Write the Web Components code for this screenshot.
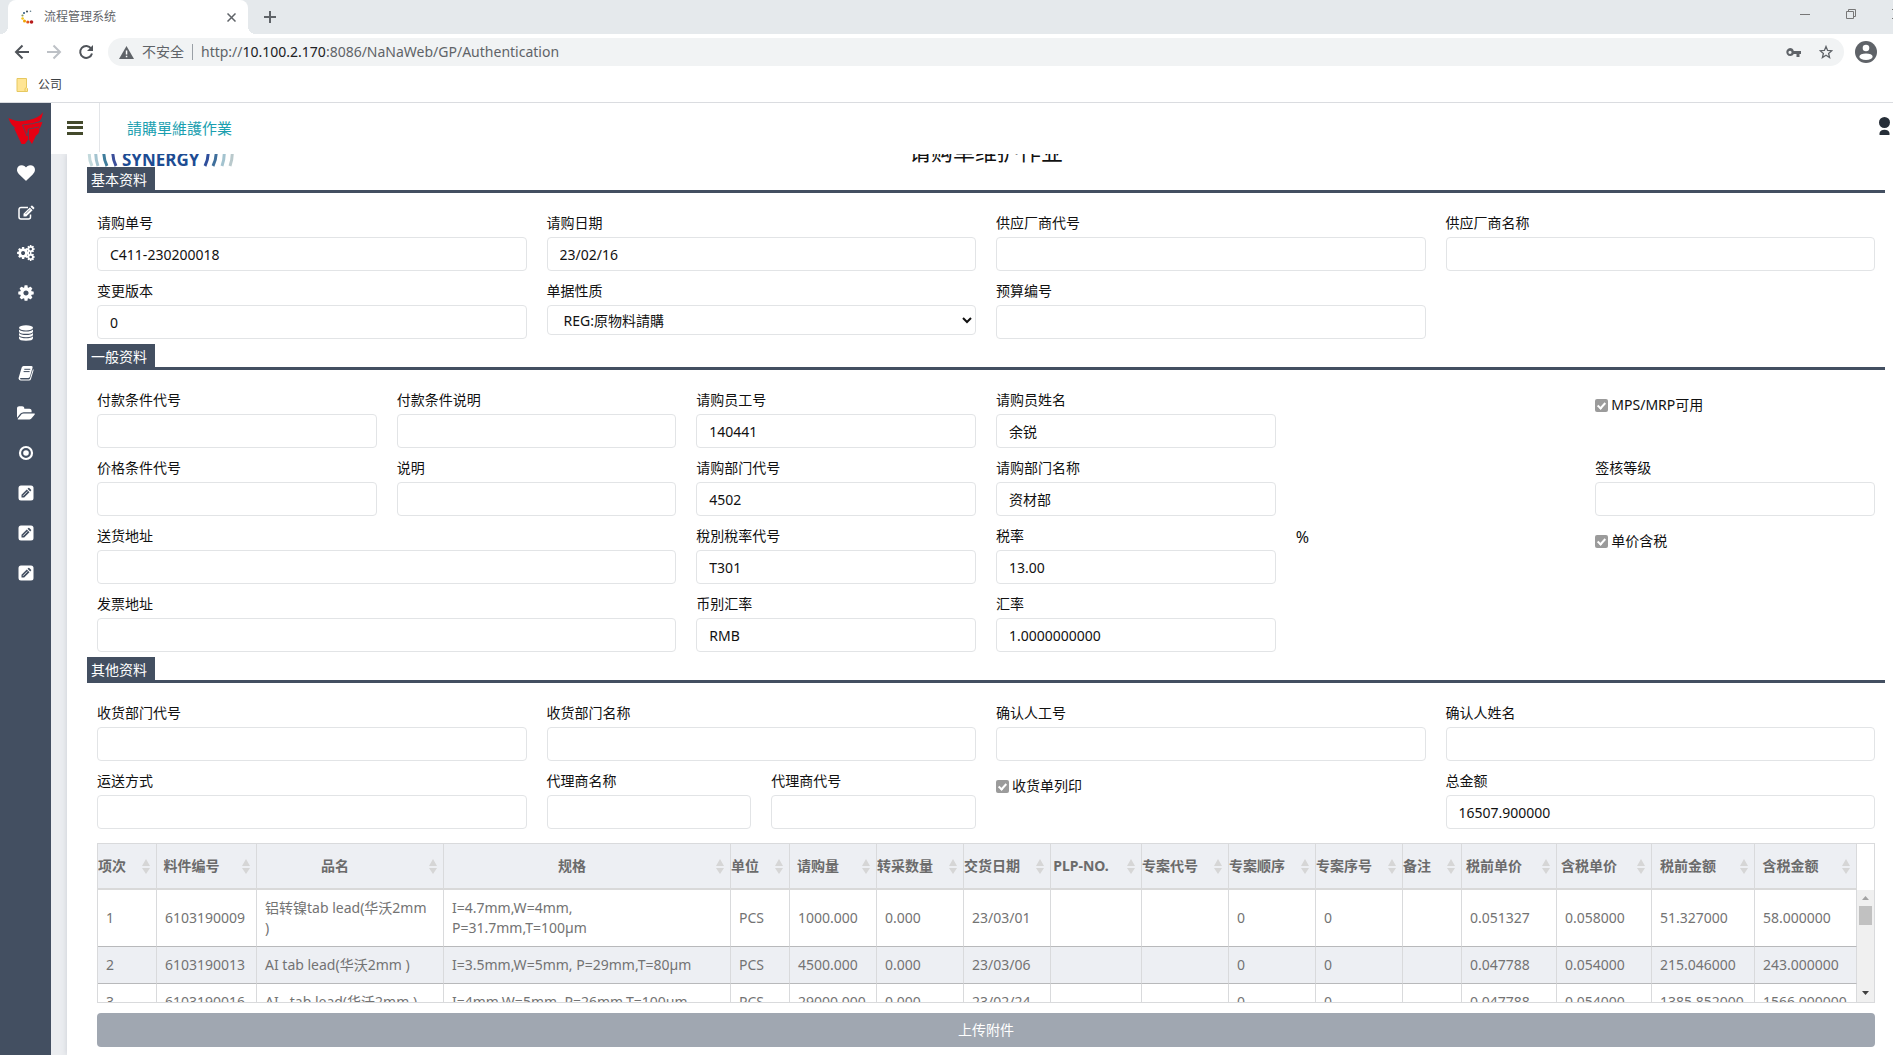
<!DOCTYPE html>
<html lang="zh-CN">
<head>
<meta charset="utf-8">
<title>流程管理系统</title>
<style>
html,body{height:100%;margin:0}
body{font:14px/20px "Noto Sans","Noto Sans CJK SC","Noto Sans CJK TC",sans-serif;color:#111;background:#fff;overflow:hidden;display:flex;flex-direction:column}
.app{flex:1;display:flex;min-height:0}
.work{flex:1;display:flex;flex-direction:column;min-width:0}
</style>
</head>
<body>
<browser-chrome page-title="流程管理系统"></browser-chrome>
<div class="app">
  <side-nav></side-nav>
  <div class="work">
    <app-header>請購單維護作業</app-header>
    <form-card heading="请购单维护作业">
      <form-section heading="基本资料">
        <form-field span="6" label="请购单号" value="C411-230200018"></form-field>
        <form-field span="6" label="请购日期" value="23/02/16"></form-field>
        <form-field span="6" label="供应厂商代号"></form-field>
        <form-field span="6" label="供应厂商名称"></form-field>
        <form-field span="6" label="变更版本" value="0"></form-field>
        <select-field span="6" label="单据性质" value="REG:原物料請購"></select-field>
        <form-field span="6" label="预算编号"></form-field>
      </form-section>
      <form-section heading="一般资料">
        <form-field span="4" label="付款条件代号"></form-field>
        <form-field span="4" label="付款条件说明"></form-field>
        <form-field span="4" label="请购员工号" value="140441"></form-field>
        <form-field span="4" label="请购员姓名" value="余锐"></form-field>
        <check-field span="4" start="21" label="MPS/MRP可用"></check-field>
        <form-field span="4" label="价格条件代号"></form-field>
        <form-field span="4" label="说明"></form-field>
        <form-field span="4" label="请购部门代号" value="4502"></form-field>
        <form-field span="4" label="请购部门名称" value="资材部"></form-field>
        <form-field span="4" start="21" label="签核等级"></form-field>
        <form-field span="8" label="送货地址"></form-field>
        <form-field span="4" label="稅別稅率代号" value="T301"></form-field>
        <form-field span="4" label="税率" value="13.00"></form-field>
        <unit-mark span="4">%</unit-mark>
        <check-field span="4" start="21" label="单价含税"></check-field>
        <form-field span="8" label="发票地址"></form-field>
        <form-field span="4" label="币别汇率" value="RMB"></form-field>
        <form-field span="4" label="汇率" value="1.0000000000"></form-field>
      </form-section>
      <form-section heading="其他资料">
        <form-field span="6" label="收货部门代号"></form-field>
        <form-field span="6" label="收货部门名称"></form-field>
        <form-field span="6" label="确认人工号"></form-field>
        <form-field span="6" label="确认人姓名"></form-field>
        <form-field span="6" label="运送方式"></form-field>
        <form-field span="3" label="代理商名称"></form-field>
        <form-field span="3" label="代理商代号"></form-field>
        <check-field span="6" label="收货单列印"></check-field>
        <form-field span="6" label="总金额" value="16507.900000"></form-field>
      </form-section>
      <data-grid></data-grid>
      <upload-button>上传附件</upload-button>
    </form-card>
  </div>
</div>
<script>
const BASE = '*{box-sizing:border-box}button,input,select{font:inherit;color:inherit;margin:0}button{border:0;padding:0;background:none;display:flex;align-items:center;justify-content:center}svg{display:block;flex:none}';
function define(name, render) {
  customElements.define(name, class extends HTMLElement {
    connectedCallback() {
      if (this.shadowRoot) return;
      const span = this.getAttribute('span'), start = this.getAttribute('start');
      if (span) this.style.gridColumn = (start ? start + ' / ' : '') + 'span ' + span;
      const t = document.createElement('template');
      t.innerHTML = '<style>' + BASE + '</style>' + render(this);
      this.attachShadow({mode: 'open'}).append(t.content);
    }
  });
}

define('browser-chrome', el => `
<style>
:host{display:block;color:#5f6368;border-bottom:1px solid #dadce0}
.strip{height:34px;background:#e5e9ec;display:flex;overflow:hidden}
.flare{width:8px;align-self:flex-end;height:8px;background:radial-gradient(circle at 0 0,#e5e9ec 8px,#fff 8px)}
.flare.r{background:radial-gradient(circle at 100% 0,#e5e9ec 8px,#fff 8px)}
.tab{width:240px;background:#fff;border-radius:8px 8px 0 0;display:flex;align-items:center;padding:0 12px 0 13px;gap:10px;font-size:12px}
.tab span{flex:1}
.plus{width:28px}
.win{margin-left:auto;display:flex}
.win button{width:46px;height:28px}
.win .close{width:19px;overflow:hidden;justify-content:flex-start;padding-left:18px}
.bar{height:36px;display:flex;align-items:center;padding:0 16px 0 14px}
.nav{display:flex;gap:16px;margin-right:14px}
.omni{flex:1;height:28px;border-radius:14px;background:#f1f3f4;display:flex;align-items:center;padding:0 11px;gap:8px;margin-right:11px}
.omni .url{flex:1}
.sep{width:1px;height:16px;background:#9aa0a6}
.url b{font-weight:400;color:#202124}
.tools{display:flex;gap:18px}
.marks{height:32px;display:flex;align-items:center;padding:0 16px 2px;font-size:12px;color:#3c4043}
.marks a{display:flex;gap:10px;align-items:center;color:inherit;text-decoration:none}
</style>
<div class="strip"><div class="flare"></div>
<div class="tab">
<svg width="13" height="14" viewBox="0 0 13 14"><circle cx="6" cy="1.500" r="1" fill="#37474f"/><circle cx="9.500" cy="1.200" r=".8" fill="#607d8b"/><circle cx="3" cy="3" r="1" fill="#26547c"/><circle cx="1.500" cy="5.500" r="1.100" fill="#8a9a5b"/><circle cx="1.600" cy="8.500" r="1.300" fill="#f5c518"/><circle cx="3.500" cy="11" r="1.500" fill="#f0a500"/><circle cx="6.800" cy="12" r="1.600" fill="#e2571e"/><circle cx="10.500" cy="12" r="1.800" fill="#b71c1c"/></svg>
<span>${el.getAttribute('page-title')}</span>
<button aria-label="关闭标签"><svg width="9" height="9" viewBox="0 0 9 9" stroke="#5f6368" stroke-width="1.500"><path d="M.5.5l8 8M8.500.5l-8 8"/></svg></button>
</div><div class="flare r"></div>
<button class="plus" aria-label="新标签"><svg width="12" height="12" stroke="#5f6368" stroke-width="2"><path d="M6 0v12M0 6h12"/></svg></button>
<div class="win"><button aria-label="最小化"><svg width="10" height="10" stroke="#777"><path d="M0 5.500h10"/></svg></button>
<button aria-label="还原"><svg width="10" height="10" fill="none" stroke="#777"><path d="M.5 2.500h7v7h-7zM2.500 2.500v-2h7v7h-2"/></svg></button>
<button class="close" aria-label="关闭"><svg width="10" height="10" stroke="#777"><path d="M0 0l10 10M10 0L0 10"/></svg></button></div></div>
<div class="bar"><div class="nav">
<button aria-label="后退"><svg width="16" height="16" fill="none" stroke="#50545a" stroke-width="2"><path d="M15 8H2M8.500 1.500L2 8l6.500 6.500"/></svg></button>
<button aria-label="前进"><svg width="16" height="16" fill="none" stroke="#bdc1c6" stroke-width="2"><path d="M1 8h13M7.500 1.500L14 8l-6.500 6.500"/></svg></button>
<button aria-label="刷新"><svg width="16" height="16" fill="none" stroke="#50545a" stroke-width="2"><path d="M13.200 4.600A6 6 0 1 0 14 9.500"/><path d="M15 1v6H9z" fill="#50545a" stroke="none"/></svg></button></div>
<div class="omni"><svg width="15" height="13" viewBox="0 0 15 13"><path d="M7.500 0L15 13H0z" fill="#5f6368"/><path d="M6.800 4.500h1.500v4H6.800zM6.800 9.700h1.500v1.500H6.800z" fill="#fff"/></svg>
<span>不安全</span><i class="sep"></i><span class="url">http://<b>10.100.2.170</b>:8086/NaNaWeb/GP/Authentication</span>
<div class="tools"><button aria-label="密码"><svg width="15" height="9" viewBox="0 0 15 9"><path fill="#5f6368" fill-rule="evenodd" d="M4 0a4 4 0 0 1 3.800 3H15v3h-1.500v3h-3V6H7.800A4 4 0 1 1 4 0zm0 2.700a1.600 1.600 0 1 0 0 3.200 1.600 1.600 0 0 0 0-3.200z"/></svg></button>
<button aria-label="收藏"><svg width="14" height="14" viewBox="0 0 14 14" fill="none" stroke="#5f6368" stroke-width="1.300"><path d="M7 1.500l1.600 3.900 4.200.3-3.200 2.700 1 4.100L7 10.300l-3.600 2.200 1-4.100L1.200 5.700l4.200-.3z"/></svg></button></div></div>
<button aria-label="用户"><svg width="22" height="22" viewBox="0 0 22 22"><circle cx="11" cy="11" r="11" fill="#5f6368"/><circle cx="11" cy="7" r="3.300" fill="#fff"/><ellipse cx="11" cy="15.700" rx="6.600" ry="3.300" fill="#fff"/></svg></button></div>
<div class="marks"><a href="#"><svg width="12" height="14" viewBox="0 0 12 14"><path d="M1 .5h9.500v9l1 1v3H1z" fill="#ffe594" stroke="#e6c860"/><path d="M9 13.500v-3l1.500-1" fill="none" stroke="#e6c860"/></svg>公司</a></div>`);

const COG = 'M1152 896q0-106-75-181t-181-75-181 75-75 181 75 181 181 75 181-75 75-181zm512-109v222q0 12-8 23t-20 13l-185 28q-19 54-39 91 35 50 107 138 10 12 10 25t-9 23q-27 37-99 108t-94 71q-12 0-26-9l-138-108q-44 23-91 38-16 136-29 186-7 28-36 28h-222q-14 0-24.500-8.500t-11.500-21.500l-28-184q-49-16-90-37l-141 107q-10 9-25 9-14 0-25-11-126-114-165-168-7-10-7-23 0-12 8-23 15-21 51-66.500t54-70.500q-27-50-41-99l-183-27q-13-2-21-12.500t-8-23.500v-222q0-12 8-23t19-13l186-28q14-46 39-92-40-57-107-138-10-12-10-24 0-10 9-23 26-36 98.500-107.500t94.500-71.500q13 0 26 10l138 107q44-23 91-38 16-136 29-186 7-28 36-28h222q14 0 24.500 8.500t11.500 21.500l28 184q49 16 90 37l142-107q9-9 24-9 13 0 25 10 129 119 165 170 7 8 7 22 0 12-8 23-15 21-51 66.500t-54 70.500q26 50 41 98l183 28q13 2 21 12.500t8 23.500z';
const cogAt = (x, y, s) => `<path transform="translate(${x} ${y}) scale(${s})" d="${COG}"/>`;
const PENCIL_BOX = ['表单', '<svg width="16" height="16" viewBox="0 0 16 16"><rect x=".5" y=".5" width="15" height="15" rx="2.500"/><path d="M3.500 12.500v-2.700l5.300-5.300 2.700 2.700-5.300 5.300zM9.500 3.800l.9-.9q.4-.4.8 0l1.900 1.900q.4.4 0 .8l-.9.900z" fill="#434f61"/><path d="M5 10.800L9.300 6.500" stroke="#fff" stroke-width=".8"/></svg>'];
const NAV = [
 ['收藏', '<svg width="18" height="18" viewBox="0 0 1792 1792"><path d="M896 1664q-26 0-44-18l-624-602q-10-8-27.500-26t-55.500-65.500-68-97.500-53.500-121-23.500-138q0-220 127-344t351-124q62 0 126.500 21.500t120 58 95.500 68.500 76 68q36-36 76-68t95.500-68.500 120-58 126.500-21.500q224 0 351 124t127 344q0 221-229 450l-623 600q-18 18-44 18z"/></svg>'],
 ['编辑', '<svg width="18" height="16" viewBox="0 0 17 16"><path d="M10.500 2.500H3.500a2 2 0 0 0-2 2v7.500a2 2 0 0 0 2 2H11a2 2 0 0 0 2-2V9.500" fill="none" stroke="#fff" stroke-width="1.500"/><path d="M6 11.500V8.700l6.300-6.300 2.800 2.800-6.300 6.300zM13 1.700l.9-.9q.5-.5 1 0l1.800 1.800q.5.5 0 1l-.9.900z"/><path d="M8 9l4.500-4.500" stroke="#434f61" stroke-width=".7"/></svg>'],
 ['流程', '<svg width="18" height="16" viewBox="0 0 18 16">' + cogAt(-0.9, 1, .00780) + cogAt(9, -.6, .0052) + cogAt(9, 7.300, .0052) + '</svg>'],
 ['设置', '<svg width="18" height="18" viewBox="0 0 1792 1792"><path d="' + COG + '"/></svg>'],
 ['数据', '<svg width="16" height="16" viewBox="0 0 16 16"><ellipse cx="8" cy="2.800" rx="7" ry="2.600"/><path d="M1 4.400q2 2 7 2t7-2v2q0 2.400-7 2.400T1 6.400zM1 8q2 2 7 2t7-2v1.800q0 2.400-7 2.400T1 9.800zM1 11.300q2 2 7 2t7-2v1.900q0 2.500-7 2.500t-7-2.500z"/></svg>'],
 ['文档', '<svg width="16" height="16" viewBox="0 0 16 16"><path d="M5.500 1h8q1.500 0 1.100 1.500L12 11.600q-.4 1.300-1.700 1.300H3q-1.300 0-1 .9.200.6 1 .6h8q.8 0 1-.8L15 4q.8.500.5 1.500l-2.600 8.700Q12.500 15.500 11 15.500H2.700Q1 15.500.6 13.800q-.1-.8.200-1.500l2.900-9.800Q4.200 1 5.500 1z"/><path d="M6.300 4.300h6M5.600 6.600h6" stroke="#434f61"/></svg>'],
 ['文件夹', '<svg width="18" height="17" viewBox="0 0 1896 1792"><path d="M1879 952q0 31-31 66l-336 396q-43 51-120.500 86.500t-143.500 35.500h-1088q-34 0-60.500-13t-26.500-43q0-31 31-66l336-396q43-51 120.500-86.500t143.500-35.500h1088q34 0 60.500 13t26.500 43zm-343-344v160h-832q-94 0-197 47.500t-164 119.500l-337 396-5 6q0-4-.5-12.500t-.5-12.500v-960q0-92 66-158t158-66h320q92 0 158 66t66 158v32h544q92 0 158 66t66 158z"/></svg>'],
 ['目标', '<svg width="16" height="16" viewBox="0 0 16 16"><circle cx="8" cy="8" r="6" fill="none" stroke="#fff" stroke-width="2.200"/><circle cx="8" cy="8" r="2.800"/></svg>'],
 PENCIL_BOX, PENCIL_BOX, PENCIL_BOX];

define('side-nav', () => `
<style>
:host{display:block;width:51px;background:#434f61;fill:#fff}
nav{display:flex;flex-direction:column;align-items:center}
.brand{height:50px;display:flex;align-items:center}
nav button{width:100%;height:40px;fill:inherit}
</style>
<nav><a class="brand" href="#" aria-label="首页"><svg width="36" height="32" viewBox="0 0 36 32"><path fill="#e60012" d="M.5 6Q9 11 21 8 31 6 35 .3 34.500 6 31.500 9.500 28 11 21 11.500L34.500 10Q33 15 31 17.500L31.500 18Q31 22 28 23.500L24 32 20.500 27 17 32H13.500L6 16 8 16.500Q2 12 .5 6Z"/><path d="M32 9.500Q26 12 14.500 13L19 24 20.500 17 31 15M20.500 17v10" stroke="#434f61" stroke-width=".8" fill="none"/></svg></a>
${NAV.map(n => `<button aria-label="${n[0]}">${n[1]}</button>`).join('')}</nav>`);

define('app-header', () => `
<style>
:host{display:flex;height:51px;flex:none;background:#fff;align-items:stretch}
.menu{width:49px;border-right:1px solid #e3e5e8;margin-bottom:2px}
a{padding:0 27px;font-size:15px;line-height:51px;color:#1b9fb0;text-decoration:none}
.me{margin:0 3px 6px auto}
</style>
<button class="menu" aria-label="菜单"><svg width="16" height="14" fill="#444a2c"><path d="M0 0h16v3H0zM0 5h16v3H0zM0 11h16v3H0z"/></svg></button>
<a href="#"><slot></slot></a>
<button class="me" aria-label="用户"><svg width="11" height="18" viewBox="0 0 11 18" fill="#262e38"><circle cx="5.500" cy="5.500" r="5.500"/><path d="M.5 18V16Q1.500 12.700 5.500 12.700T10.500 16V18z"/></svg></button>`);

define('form-card', el => `
<style>
:host{display:block;flex:1;min-height:0;background:#ebedf0;padding-left:16px;overflow:hidden}
.card{background:#fff;min-height:100%;padding:0 8px 8px 20px;box-shadow:0 0 6px #c9ccd4}
.banner{height:13px;overflow:hidden;display:flex;align-items:flex-end}
.banner>*{flex:1}
h1{margin:0;font-size:22px;font-weight:400;line-height:32px;text-align:center;white-space:nowrap}
svg text{font:700 17px "Liberation Sans Narrow","Open Sans",sans-serif}
</style>
<div class="card"><div class="banner"><div><svg width="148" height="30" viewBox="0 0 148 30" fill="none" stroke-width="3">
<path d="M3 12q-2 9 2 17" stroke="#c3d9dc"/><path d="M9 12q-1 9 2 17" stroke="#a3c3cf"/><path d="M17 12q-1 9 3 17" stroke="#3f7d9c"/><path d="M26 12q-1 9 3 17" stroke="#3b4f9a"/>
<text x="35" y="29" fill="#1d4c93">SYNERGY</text>
<path d="M121 12q1 9-3 17" stroke="#2f4f9c"/><path d="M129 12q1 9-3 17" stroke="#3f6f9c"/><path d="M137 12q1 9-2 17" stroke="#a3c3cf"/><path d="M145 12q1 9-2 17" stroke="#b9c9cc"/></svg></div>
<h1>${el.getAttribute('heading')}</h1><div></div></div><slot></slot></div>`);

define('form-section', el => `
<style>
:host{display:block;margin-bottom:5px}
header{border-bottom:3px solid #434f61;display:flex}
h2{margin:0;background:#434f61;color:#fff;font-size:14px;font-weight:400;line-height:21px;padding:2px 8px 0 4px}
.grid{display:grid;grid-template-columns:repeat(24,minmax(0,1fr));gap:8px 20px;padding:18px 10px 0}
</style>
<header><h2>${el.getAttribute('heading')}</h2></header><div class="grid"><slot></slot></div>`);

const FIELD = ':host{display:flex;flex-direction:column;gap:2px;height:60px}label{line-height:24px}input,select{width:100%;background:#fff;border:1px solid #e2e4e6;border-radius:4px;height:34px;padding:0 12px}select{height:30px}';
define('form-field', el => `<style>${FIELD}</style><label for="f">${el.getAttribute('label')}</label><input id="f" type="text" value="${el.getAttribute('value') || ''}">`);
define('select-field', el => `<style>${FIELD}select{padding:0 0 0 12px}</style><label for="f">${el.getAttribute('label')}</label><select id="f"><option>${el.getAttribute('value')}</option></select>`);
define('check-field', el => `
<style>
:host{display:block}
label{display:inline-flex;align-items:center;gap:3px;height:34px}
input{appearance:none;width:13px;height:13px;border-radius:2px;background:#9b9b9b;display:flex;justify-content:center;flex:none}
input:checked::before{content:"";width:3px;height:6px;margin-top:2px;border:solid #fff;border-width:0 2px 2px 0;transform:rotate(42deg)}
</style><label><input type="checkbox" checked>${el.getAttribute('label')}</label>`);
define('unit-mark', () => '<style>:host{display:block;line-height:26px;font-size:16px}</style><slot></slot>');

const COLS = [['项次',59],['料件编号',100],['品名',187],['规格',287],['单位',59],['请购量',87],['转采数量',87],['交货日期',87],['PLP-NO.',91],['专案代号',87],['专案顺序',87],['专案序号',87],['备注',59],['税前单价',95],['含税单价',95],['税前金额',103],['含税金额',102]];
const ROWS = [
 ['1','6103190009','铝转镍tab lead(华沃2mm<br>)','I=4.7mm,W=4mm,<br>P=31.7mm,T=100µm','PCS','1000.000','0.000','23/03/01','','','0','0','','0.051327','0.058000','51.327000','58.000000'],
 ['2','6103190013','AI tab lead(华沃2mm )','I=3.5mm,W=5mm, P=29mm,T=80µm','PCS','4500.000','0.000','23/03/06','','','0','0','','0.047788','0.054000','215.046000','243.000000'],
 ['3','6103190016','AI,&nbsp; tab lead(华沃2mm )','I=4mm,W=5mm, P=26mm,T=100µm','PCS','29000.000','0.000','23/02/24','','','0','0','','0.047788','0.054000','1385.852000','1566.000000']];
define('data-grid', () => `
<style>
:host{box-sizing:border-box;display:flex;margin:14px 10px 0;height:160px;border:1px solid #d9dadc;overflow:hidden;color:#737373}
.view{flex:1;overflow:hidden}
table{width:100%;table-layout:fixed;border-collapse:separate;border-spacing:0}
th,td{padding:0;border-right:1px solid #d9dadc;text-align:left;white-space:nowrap}
th{background:#edeff3;border-bottom:2px solid #d9d9d9;height:46px;color:#6b6b6b}
th div{display:flex;align-items:center;padding-right:6px}
th span{flex:1;text-align:center}
th svg{margin-left:16px}
td{padding:8px 0 8px 8px;border-bottom:1px solid #b8b9bb;line-height:20px}
tr:nth-child(even) td{background:#edeff3}
.scroll{width:17px;margin-top:46px;background:#f0f0f0;display:flex;flex-direction:column;align-items:center;padding:6px 2px 7px;justify-content:space-between}
.thumb{width:13px;height:19px;background:#c1c1c1;margin:6px 0 auto}
</style>
<div class="view"><table><colgroup>${COLS.map(c => `<col style="width:${c[1]}px">`).join('')}</colgroup>
<thead><tr>${COLS.map(c => `<th scope="col"><div><span>${c[0]}</span><svg width="8" height="15" fill="#d6d6d6"><path d="M4 0l4 7H0zM4 15l4-6H0z"/></svg></div></th>`).join('')}</tr></thead>
<tbody>${ROWS.map(r => `<tr>${r.map(c => `<td>${c}</td>`).join('')}</tr>`).join('')}</tbody></table></div>
<div class="scroll"><svg width="7" height="4"><path d="M3.500 0L7 4H0z" fill="#a3a3a3"/></svg><div class="thumb"></div><svg width="7" height="4"><path d="M3.500 4L7 0H0z" fill="#404040"/></svg></div>`);

define('upload-button', () => `
<style>:host{display:block;margin:10px 10px 0}button{width:100%;height:34px;border-radius:4px;background:#a0a7b1;color:#fff}</style>
<button type="button"><slot></slot></button>`);
</script>
</body>
</html>
